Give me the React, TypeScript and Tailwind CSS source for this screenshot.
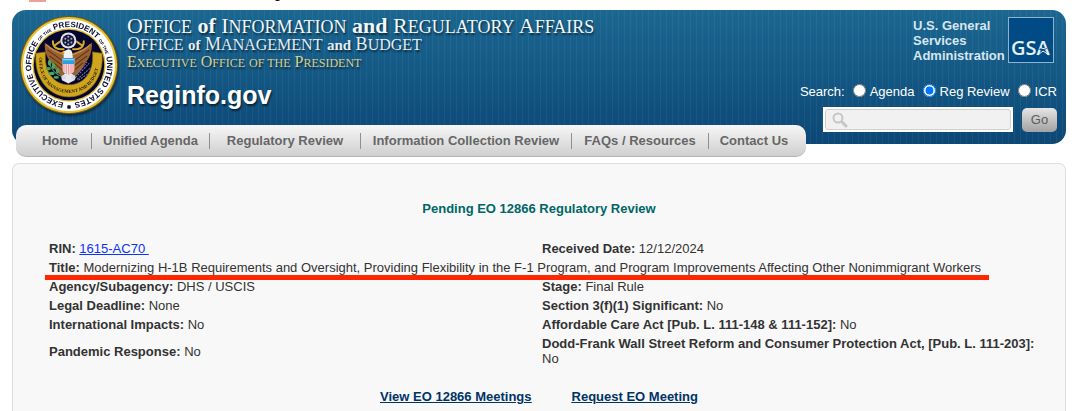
import React, { useState } from 'react';

const NAV_ITEMS = [
  { label: 'Home', width: 'w-[63px]' },
  { label: 'Unified Agenda', width: 'w-[118px]' },
  { label: 'Regulatory Review', width: 'w-[151px]' },
  { label: 'Information Collection Review', width: 'w-[211px]' },
  { label: 'FAQs / Resources', width: 'w-[137px]' },
  { label: 'Contact Us', width: 'w-[90px]' },
];

const SEARCH_SCOPES = ['Agenda', 'Reg Review', 'ICR'];

interface FieldProps {
  label: string;
  children: React.ReactNode;
}

function Field({ label, children }: FieldProps) {
  return (
    <>
      <b>{label}:</b> {children}
    </>
  );
}

interface CapsProps {
  text: string;
  small: string;
  joiner?: string;
}

// Words in upper case get a larger first letter, lower case ones are set bold
function Caps({ text, small, joiner }: CapsProps) {
  return (
    <>
      {text.split(' ').map((word, i) => (
        <React.Fragment key={i}>
          {i > 0 && ' '}
          {word === word.toLowerCase() ? (
            <b className={joiner}>{word}</b>
          ) : (
            <>
              {word[0]}
              <span className={small}>{word.slice(1)}</span>
            </>
          )}
        </React.Fragment>
      ))}
    </>
  );
}

function Seal() {
  return (
    <svg viewBox="60 47 292 292" className="h-[98px] w-[98px] shrink-0 drop-shadow-[1px_2px_1px_rgba(0,0,0,0.45)]" role="img" aria-label="Seal">
      <defs>
        <path id="ring" d="M206 306 A113 113 0 1 1 207 306" />
        <path id="ribbon" d="M118 164 C110 230 150 276 206 276 C262 276 302 230 294 164" />
      </defs>
      <circle cx="206" cy="193" r="146" fill="#6d5a1c" />
      <circle cx="206" cy="193" r="143" fill="#e8c22e" />
      <circle cx="206" cy="193" r="137" fill="#fff" />
      <circle cx="206" cy="193" r="109" fill="#d9b52a" />
      <circle cx="206" cy="193" r="105" fill="#04052f" />
      <text fill="#0b0b33" fontFamily="Liberation Sans" fontWeight="700" fontSize="24">
        <textPath href="#ring" startOffset="16">
          EXECUTIVE OFFICE <tspan fontSize="13">OF THE</tspan> PRESIDENT <tspan fontSize="13">OF THE</tspan> UNITED STATES
        </textPath>
      </text>
      <rect x="201" y="313" width="10" height="10" rx="2" fill="#0b0b33" />

      {/* Scroll work beside the glory */}
      <path d="M158 122 C158 142 172 148 190 146 M250 122 C250 142 236 148 218 146 M164 134 L178 124 M244 134 L230 124" fill="none" stroke="#d8ac22" strokeWidth="6" strokeLinecap="round" />

      {/* Ribbon */}
      <path d="M108 158 L136 154 C130 214 162 252 206 252 C250 252 282 214 276 154 L304 158 C312 226 270 288 206 288 C142 288 100 226 108 158 Z" fill="#d0a51e" stroke="#8b6a10" strokeWidth="2" />
      <text fill="#2c2003" fontFamily="Liberation Serif" fontWeight="700" fontSize="14">
        <textPath href="#ribbon" startOffset="6">
          OFFICE OF MANAGEMENT AND BUDGET
        </textPath>
      </text>

      {/* Wings */}
      <path d="M192 158 C170 150 150 142 134 126 C132 150 140 172 154 188 C164 208 176 222 190 230 L196 190 Z" fill="#9a6130" />
      <path d="M216 158 C238 150 258 142 274 126 C276 150 268 172 254 188 C244 208 232 222 218 230 L212 190 Z" fill="#9a6130" />
      <path d="M142 148 L186 180 M148 166 L186 194 M160 186 L186 208 M266 148 L222 180 M260 166 L222 194 M248 186 L222 208" stroke="#5a3216" strokeWidth="3" />
      <path d="M138 132 C152 146 172 156 190 162 M270 132 C256 146 236 156 218 162" fill="none" stroke="#c58a4a" strokeWidth="4" />

      {/* Olive branch and arrows */}
      <path d="M186 228 C168 222 154 208 146 184" fill="none" stroke="#3f9a52" strokeWidth="3" />
      <g fill="#4aa65c">
        <ellipse cx="148" cy="186" rx="5" ry="9" />
        <ellipse cx="144" cy="204" rx="8" ry="5" />
        <ellipse cx="160" cy="196" rx="5" ry="9" />
        <ellipse cx="154" cy="218" rx="9" ry="5" />
        <ellipse cx="172" cy="210" rx="5" ry="8" />
        <ellipse cx="168" cy="230" rx="8" ry="4" />
      </g>
      <path d="M226 230 L266 188 M228 222 L260 184 M230 236 L272 200 M234 238 L268 216" stroke="#777c94" strokeWidth="3" strokeDasharray="6 3" />

      {/* Tail, head and shield */}
      <path d="M192 218 L216 218 L224 238 L204 248 L184 238 Z" fill="#e8e8ea" />
      <circle cx="190" cy="230" r="7" fill="#d8dbe2" />
      <circle cx="219" cy="230" r="7" fill="#d8dbe2" />
      <path d="M190 152 L204 146 C214 146 218 154 217 176 L190 176 Z" fill="#f2f2f2" />
      <path d="M192 150 L182 156 L192 160 Z" fill="#e0a91e" />
      <path d="M187 172 H222 V206 C222 216 212 220 204 224 C196 220 187 216 187 206 Z" fill="#f8dfe1" />
      <path d="M191 190 V214 M198 190 V220 M205 190 V222 M212 190 V219 M218 190 V214" stroke="#ea8f98" strokeWidth="3" />
      <path d="M187 172 H222 V190 H187 Z" fill="#2f9fe0" />
      <path d="M187 177 H222" stroke="#8fd0f4" strokeWidth="4" />

      {/* Glory */}
      <circle cx="204" cy="120" r="24" fill="#e4e4e8" />
      <circle cx="204" cy="120" r="18" fill="#16183f" />
      <g fill="#a9acbf">
        <circle cx="204" cy="109" r="3" />
        <circle cx="195" cy="115" r="3" />
        <circle cx="213" cy="115" r="3" />
        <circle cx="204" cy="120" r="3" />
        <circle cx="195" cy="126" r="3" />
        <circle cx="213" cy="126" r="3" />
        <circle cx="204" cy="131" r="3" />
      </g>
    </svg>
  );
}

function GsaLogo() {
  return (
    <svg viewBox="0 0 46 46" className="h-[46px] w-[46px] shrink-0" role="img" aria-label="GSA">
      <rect x="0.5" y="0.5" width="45" height="45" fill="#004a86" stroke="#8db4cd" />
      <text x="3" y="38" fill="#e6eff6" fontFamily="Open Sans" fontWeight="600" fontSize="20">
        GSA
      </text>
      <path d="M34 27 L36 31 L39 31 L37 34 L38 37 L35 35 L31 38 L33 34 L31 32 L34 31 Z" fill="#004a86" />
      <path d="M30 38 L35 34 L41 38 M33 31 L38 32" fill="none" stroke="#e6eff6" strokeWidth="1" />
    </svg>
  );
}

function SearchForm() {
  const [scope, setScope] = useState('Reg Review');
  const [query, setQuery] = useState('');

  return (
    <form onSubmit={(e) => e.preventDefault()} className="flex flex-col items-end">
      <div className="flex h-4 items-center text-[13px] leading-4 text-white">
        <span>Search:</span>
        {SEARCH_SCOPES.map((name) => (
          <label key={name} className="ml-2 flex items-center gap-1">
            <input
              type="radio"
              name="scope"
              checked={scope === name}
              onChange={() => setScope(name)}
              className="mb-1 h-[13px] w-[13px]"
            />
            {name}
          </label>
        ))}
      </div>
      <div className="mt-[7px] flex items-center gap-[9px]">
        <div className="relative bg-white p-[2px]">
          <input
            type="text"
            aria-label="Search"
            value={query}
            onChange={(e) => setQuery(e.target.value)}
            className="block h-[21px] w-[186px] rounded-[3px] border border-[#cfcfcf] bg-[#f1f1f1] pl-7 text-[13px] text-[#333] outline-none"
          />
          <svg viewBox="0 0 16 16" className="pointer-events-none absolute top-[5px] left-[9px] h-4 w-4" fill="none" stroke="#c6c6c6">
            <circle cx="6" cy="6" r="4.500" strokeWidth="2" />
            <path d="M10 10 L14 14" strokeWidth="3" strokeLinecap="round" />
          </svg>
        </div>
        <button
          type="submit"
          className="h-6 w-[35px] rounded-[5px] bg-linear-to-b from-[#e6e6e6] to-[#a2a2a2] text-[13px] leading-6 text-[#5c5c5c]"
        >
          Go
        </button>
      </div>
    </form>
  );
}

function Header() {
  return (
    <header>
      <div className="flex h-[134px] justify-between rounded-[14px] bg-[repeating-linear-gradient(90deg,rgba(255,255,255,0.05)_0_1px,transparent_1px_6px),linear-gradient(180deg,#1b6791,#0c4776)] pt-[6px] pr-[9px] pl-2">
        <div className="flex gap-[9px]">
          <Seal />
          <div className="pt-[1px] text-white [text-shadow:1px_2px_2px_rgba(0,0,0,0.6)]">
            <div className="font-['Liberation_Serif'] whitespace-nowrap">
              <p className="h-[18px] text-[22px] leading-[18px] text-[#f1f6f9]">
                <Caps text="OFFICE of INFORMATION and REGULATORY AFFAIRS" small="text-[18px]" />
              </p>
              <p className="h-[18px] text-[18px] leading-[19px] text-[#e3edf3]">
                <Caps text="OFFICE of MANAGEMENT and BUDGET" small="text-[16px]" joiner="text-[15px]" />
              </p>
              <p className="h-[18px] text-[16px] leading-[18px] text-[#d9cf92]">
                <Caps text="EXECUTIVE OFFICE" small="text-[12px]" />{' '}
                <span className="text-[12px]">OF THE</span> <Caps text="PRESIDENT" small="text-[12px]" />
              </p>
            </div>
            <p className="mt-[10px] text-[25px] leading-7 font-bold">Reginfo.gov</p>
          </div>
        </div>
        <div className="flex flex-col items-end">
          <div className="mt-[1px] mr-[3px] mb-[21px] flex gap-1">
            <p className="w-[91px] pt-[1px] text-[13px] leading-[15px] font-bold text-[#d6e6ef]">
              U.S. General Services Administration
            </p>
            <GsaLogo />
          </div>
          <SearchForm />
        </div>
      </div>
      <nav className="relative -mt-[19px] ml-1 flex h-8 w-fit items-center rounded-[10px] border-b border-[#b5b5b5] bg-linear-to-b from-[#f7f7f7] to-[#cfcfcf] pr-[7px] pl-[13px]">
        {NAV_ITEMS.map((item, i) => (
          <a
            key={item.label}
            href="#"
            className={`${item.width} h-4 text-center text-[13px] leading-4 font-bold whitespace-nowrap text-[#666] ${i < NAV_ITEMS.length - 1 ? 'border-r border-[#8f8f8f]' : ''}`}
          >
            {item.label}
          </a>
        ))}
      </nav>
    </header>
  );
}

export default function App() {
  return (
    <div className="flex min-h-screen flex-col bg-white pr-[14px] pl-3 font-['Liberation_Sans',Arial,sans-serif] text-[#333]">
      {/* Tail end of the government banner */}
      <div className="flex h-[10px] items-start pl-[17px]">
        <span className="h-[2px] w-[17px] bg-[#f0a196]" />
        <span className="ml-[228px] flex h-[2px] items-end overflow-hidden text-[12px] leading-[15px] font-bold text-black">g</span>
      </div>

      <Header />

      <main className="mt-[6px] flex-1 rounded-t-[7px] border border-b-0 border-[#dedede] bg-[#f8f8f8] px-6 pt-[37px] text-[13px] leading-[15px]">
        <h1 className="text-center font-bold text-[#006666]">Pending EO 12866 Regulatory Review</h1>

        <div className="mt-[23px] pl-[10px]">
          <table className="w-full table-fixed border-collapse [&_td]:p-[2px]">
            <colgroup>
              <col className="w-[493px]" />
              <col />
            </colgroup>
            <tbody>
              <tr>
                <td>
                  <Field label="RIN">
                    <a href="#" className="whitespace-pre text-[#0a33ff] underline">{'1615-AC70 '}</a>
                  </Field>
                </td>
                <td><Field label="Received Date">12/12/2024</Field></td>
              </tr>
              <tr>
                <td colSpan={2} className="relative">
                  <Field label="Title">
                    Modernizing H-1B Requirements and Oversight, Providing Flexibility in the F-1 Program, and Program Improvements Affecting Other Nonimmigrant Workers
                  </Field>
                  {/* Marker stroke under the title */}
                  <span className="absolute right-[52px] -bottom-[3px] -left-[2px] h-[5px] bg-[#ff2600]" />
                </td>
              </tr>
              <tr>
                <td><Field label="Agency/Subagency">DHS / USCIS</Field></td>
                <td><Field label="Stage">Final Rule</Field></td>
              </tr>
              <tr>
                <td><Field label="Legal Deadline">None</Field></td>
                <td><Field label="Section 3(f)(1) Significant">No</Field></td>
              </tr>
              <tr>
                <td><Field label="International Impacts">No</Field></td>
                <td><Field label="Affordable Care Act [Pub. L. 111-148 & 111-152]">No</Field></td>
              </tr>
              <tr>
                <td><Field label="Pandemic Response">No</Field></td>
                <td><Field label="Dodd-Frank Wall Street Reform and Consumer Protection Act, [Pub. L. 111-203]">No</Field></td>
              </tr>
            </tbody>
          </table>
        </div>

        <div className="mt-[21px] flex justify-center gap-10 font-bold text-[#003366] underline">
          <a href="#">View EO 12866 Meetings</a>
          <a href="#">Request EO Meeting</a>
        </div>
      </main>
    </div>
  );
}
